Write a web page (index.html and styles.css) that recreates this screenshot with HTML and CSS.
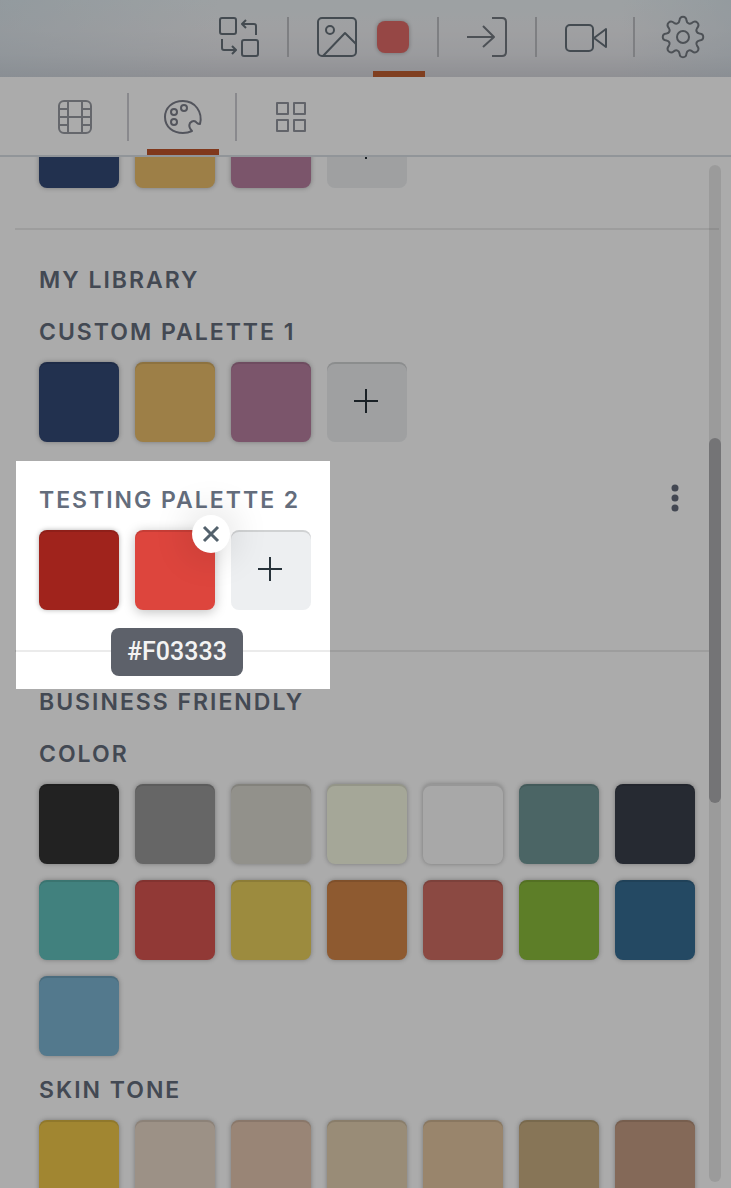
FILE: index.html
```
<!DOCTYPE html>
<html lang="en">
<head>
<meta charset="utf-8">
<meta name="viewport" content="width=device-width, initial-scale=1">
<title>Color palettes</title>
<link rel="stylesheet" href="styles.css">
</head>
<body>
<div class="app">
  <header class="toolbar">
    <button class="tool" type="button" aria-label="Swap">
      <svg class="icon" width="40" height="40" viewBox="0 0 40 40"><rect x="1" y="1" width="16" height="16" rx="2"/><rect x="23" y="23" width="16" height="16" rx="2"/><path d="M37 18V9q0-2-2-2H23M27 3l-4 4 4 4M3 22v9q0 2 2 2h12M13 29l4 4-4 4"/></svg>
    </button>
    <span class="rule"></span>
    <div class="tool-pair">
      <button class="tool" type="button" aria-label="Image">
        <svg class="icon" width="40" height="40" viewBox="0 0 40 40"><rect x="1" y="1" width="38" height="38" rx="4"/><circle cx="13" cy="13" r="4"/><path d="M6 39 28 16l11 11"/></svg>
      </button>
      <button class="tool tool-color" type="button" aria-label="Color"><span class="color-chip"></span></button>
    </div>
    <span class="rule"></span>
    <button class="tool" type="button" aria-label="Enter">
      <svg class="icon icon-soft" width="40" height="40" viewBox="0 0 40 40"><path d="M25 1h10q4 0 4 4v30q0 4-4 4H25M0 20h27M16 9l11 11-11 10"/></svg>
    </button>
    <span class="rule"></span>
    <button class="tool" type="button" aria-label="Video">
      <svg class="icon" width="40" height="40" viewBox="0 0 40 40"><rect x="1" y="8" width="27" height="26" rx="4"/><path d="M29 21l12-9v18z"/></svg>
    </button>
    <span class="rule"></span>
    <button class="tool" type="button" aria-label="Settings">
      <svg class="icon icon-soft" width="40" height="40" viewBox="0 0 40 40"><circle cx="20" cy="20" r="6"/><path d="M16.500 3.500C17-1.500 23-1.500 23.500 3.500C24 6.500 26.500 7.500 29 5.800C33 2.500 37.500 7 34.200 11C32.500 13.500 33.500 16 36.500 16.500C41.500 17 41.500 23 36.500 23.500C33.500 24 32.500 26.500 34.200 29C37.500 33 33 37.500 29 34.200C26.500 32.500 24 33.500 23.500 36.500C23 41.500 17 41.500 16.500 36.500C16 33.500 13.500 32.500 11 34.200C7 37.500 2.500 33 5.800 29C7.500 26.500 6.500 24 3.500 23.500C-1.500 23-1.500 17 3.500 16.500C6.500 16 7.500 13.500 5.800 11C2.500 7 7 2.500 11 5.800C13.500 7.500 16 6.500 16.500 3.500Z"/></svg>
    </button>
  </header>

  <nav class="tabs" aria-label="Panels">
    <button class="tab" type="button" aria-label="Media">
      <svg class="icon icon-light" width="34" height="34" viewBox="0 0 34 34"><rect x="1" y="1" width="32" height="32" rx="5"/><path d="M10 1v32M24 1v32M1 9h9M1 17h32M1 25h9M24 9h9M24 25h9"/></svg>
    </button>
    <button class="tab tab-active" type="button" aria-label="Palettes">
      <svg class="icon icon-palette" width="38" height="34" viewBox="1 1 38 34"><path d="M37 25C40 13 32 2 20 2C9 2 2 9 2 18C2 28 10 34 20 34Q25 34 29 32Q25 28 27 24Q31 20 34 24Q35 25 37 25Z"/><circle cx="11" cy="13" r="3"/><circle cx="21" cy="9" r="3"/><circle cx="11" cy="23" r="3"/></svg>
    </button>
    <button class="tab" type="button" aria-label="Layouts">
      <svg class="icon icon-grid" width="30" height="30" viewBox="0 0 30 30"><path d="M1 1h11v11H1zM18 1h11v11H18zM1 18h11v11H1zM18 18h11v11H18z"/></svg>
    </button>
  </nav>

  <main class="panel">
    <div class="content">
      <div class="swatches">
        <button class="swatch navy" type="button" aria-label="Navy"></button>
        <button class="swatch gold" type="button" aria-label="Gold"></button>
        <button class="swatch mauve" type="button" aria-label="Mauve"></button>
        <button class="swatch add" type="button" aria-label="Add color"><svg class="plus" width="26" height="26" viewBox="0 0 26 26"><path d="M12 0v24M0 12h24"/></svg></button>
      </div>

      <section class="library">
        <h2>MY LIBRARY</h2>
        <div class="palette">
          <h3>CUSTOM PALETTE 1</h3>
          <div class="swatches">
            <button class="swatch navy" type="button" aria-label="Navy"></button>
            <button class="swatch gold" type="button" aria-label="Gold"></button>
            <button class="swatch mauve" type="button" aria-label="Mauve"></button>
            <button class="swatch add" type="button" aria-label="Add color"><svg class="plus" width="26" height="26" viewBox="0 0 26 26"><path d="M12 0v24M0 12h24"/></svg></button>
          </div>
        </div>
        <div class="palette palette-current">
          <div class="palette-head">
            <h3>TESTING PALETTE 2</h3>
            <button class="more" type="button" aria-label="More"><svg width="8" height="28" viewBox="0 0 8 28"><circle cx="4" cy="4" r="3.500"/><circle cx="4" cy="14" r="3.500"/><circle cx="4" cy="24" r="3.500"/></svg></button>
          </div>
          <div class="swatches">
            <button class="swatch crimson" type="button" aria-label="Crimson"></button>
            <div class="swatch-hover">
              <button class="swatch scarlet" type="button" aria-describedby="tip" aria-label="Scarlet"></button>
              <button class="remove" type="button" aria-label="Remove"><svg width="14" height="14" viewBox="0 0 14 14"><path d="M0 0l14 14M14 0 0 14"/></svg></button>
              <span class="tooltip" id="tip" role="tooltip">#F03333</span>
            </div>
            <button class="swatch add" type="button" aria-label="Add color"><svg class="plus" width="26" height="26" viewBox="0 0 26 26"><path d="M12 0v24M0 12h24"/></svg></button>
          </div>
        </div>
      </section>

      <section class="library">
        <h2>BUSINESS FRIENDLY</h2>
        <div class="palette">
          <h3>COLOR</h3>
          <div class="swatches">
            <button class="swatch charcoal" type="button" aria-label="Charcoal"></button>
            <button class="swatch gray" type="button" aria-label="Gray"></button>
            <button class="swatch stone" type="button" aria-label="Stone"></button>
            <button class="swatch ivory" type="button" aria-label="Ivory"></button>
            <button class="swatch white" type="button" aria-label="White"></button>
            <button class="swatch sage" type="button" aria-label="Sage"></button>
            <button class="swatch slate" type="button" aria-label="Slate"></button>
            <button class="swatch teal" type="button" aria-label="Teal"></button>
            <button class="swatch red" type="button" aria-label="Red"></button>
            <button class="swatch yellow" type="button" aria-label="Yellow"></button>
            <button class="swatch orange" type="button" aria-label="Orange"></button>
            <button class="swatch coral" type="button" aria-label="Coral"></button>
            <button class="swatch green" type="button" aria-label="Green"></button>
            <button class="swatch blue" type="button" aria-label="Blue"></button>
            <button class="swatch sky" type="button" aria-label="Sky"></button>
          </div>
        </div>
        <div class="palette">
          <h3>SKIN TONE</h3>
          <div class="swatches">
            <button class="swatch skin-1" type="button" aria-label="Skin tone 1"></button>
            <button class="swatch skin-2" type="button" aria-label="Skin tone 2"></button>
            <button class="swatch skin-3" type="button" aria-label="Skin tone 3"></button>
            <button class="swatch skin-4" type="button" aria-label="Skin tone 4"></button>
            <button class="swatch skin-5" type="button" aria-label="Skin tone 5"></button>
            <button class="swatch skin-6" type="button" aria-label="Skin tone 6"></button>
            <button class="swatch skin-7" type="button" aria-label="Skin tone 7"></button>
          </div>
        </div>
      </section>
    </div>
    <div class="scrollbar"><div class="thumb"></div></div>
  </main>
  <div class="spotlight"></div>
</div>
</body>
</html>
```
FILE: styles.css
```
* { box-sizing: border-box; }

body {
  margin: 0;
  background: #fff;
  color: #646d7c;
  font-family: Inter, "Liberation Sans", sans-serif;
}

button {
  padding: 0;
  border: 0;
  background: none;
  color: inherit;
  cursor: pointer;
}

svg {
  display: block;
  overflow: visible;
}

.app {
  position: relative;
  display: flex;
  flex-direction: column;
  height: 100vh;
  overflow: hidden;
}

/* Top toolbar */
.toolbar {
  display: flex;
  flex: none;
  align-items: center;
  justify-content: flex-end;
  gap: 28px;
  height: 77px;
  padding: 0 28px 3px 0;
  background:
    linear-gradient(90deg, rgba(190, 210, 222, 0.35), transparent 30%, transparent 85%, rgba(190, 210, 222, 0.3)),
    linear-gradient(#eaf1f4, #eeeff2 40%, #e7e8ec 70%, #d5d6dc);
}

.rule {
  width: 2px;
  height: 40px;
  background: #bcbec2;
}

.tool-pair {
  display: flex;
  align-items: center;
  align-self: stretch;
  gap: 20px;
}

.icon {
  fill: none;
  stroke: #66717a;
  stroke-width: 2;
  stroke-linecap: butt;
  stroke-linejoin: round;
}

.icon-soft { stroke: #737980; }
.icon-light { stroke: #979aa1; }
.icon-palette { stroke: #7d7f8b; }
.icon-grid { stroke: #92959e; }

.tool-color {
  position: relative;
  display: flex;
  align-items: center;
  align-self: stretch;
}

.tool-color::after {
  content: "";
  position: absolute;
  bottom: -3px;
  left: -4px;
  width: 52px;
  height: 6px;
  background: #bf5e30;
}

.color-chip {
  width: 32px;
  height: 32px;
  border-radius: 8px;
  background: #e06b68;
  box-shadow: 0 0 4px rgba(0, 0, 0, 0.3);
}

/* Panel tabs */
.tabs {
  display: flex;
  flex: none;
  align-items: center;
  height: 80px;
  padding-left: 21px;
  border-bottom: 2px solid #d9dee5;
}

.tab {
  position: relative;
  display: flex;
  align-items: center;
  justify-content: center;
  align-self: stretch;
  width: 108px;
  padding-top: 2px;
}

.tab + .tab::before {
  content: "";
  position: absolute;
  top: 16px;
  left: -2px;
  width: 2px;
  height: 48px;
  background: #cccdd2;
}

.tab-active::after {
  content: "";
  position: absolute;
  bottom: 0;
  left: 18px;
  width: 72px;
  height: 6px;
  background: #bf542b;
}

/* Scrolled palette list */
.panel {
  position: relative;
  flex: 1;
  min-height: 0;
  overflow: hidden;
}

.content { margin-top: -49px; }

.swatches {
  display: flex;
  flex-wrap: wrap;
  gap: 16px;
  padding: 0 36px 0 39px;
}

.library {
  margin: 40px 12px 0 15px;
  padding-top: 32px;
  border-top: 2px solid rgba(0, 0, 0, 0.08);
}

.library .swatches { padding: 0 24px; }

h2, h3 {
  margin: 0;
  padding: 0 24px;
  font-size: 23px;
  font-weight: 600;
  line-height: 36px;
  letter-spacing: 2px;
}

.palette {
  display: flex;
  flex-direction: column;
  gap: 12px;
  margin-top: 16px;
}

.palette-current { margin-top: 40px; }

.palette-head {
  display: flex;
  align-items: flex-start;
  justify-content: space-between;
  padding-right: 40px;
}

.more {
  padding-top: 2px;
  fill: #646b7b;
}

.swatch {
  display: flex;
  align-items: center;
  justify-content: center;
  width: 80px;
  height: 80px;
  border-radius: 8px;
  box-shadow: inset 0 2px 0 rgba(0, 0, 0, 0.1), 0 0 5px rgba(0, 0, 0, 0.3);
}

.add {
  background: #edeff1;
  box-shadow: inset 0 2px 0 rgba(0, 0, 0, 0.12);
}

.plus {
  fill: none;
  stroke: #27323a;
  stroke-width: 2;
}

.swatch-hover { position: relative; }

.swatch-hover .swatch {
  box-shadow: inset 0 2px 0 rgba(0, 0, 0, 0.1), 0 2px 12px rgba(0, 0, 0, 0.25);
}

.remove {
  position: absolute;
  z-index: 1;
  top: -15px;
  right: -15px;
  display: flex;
  align-items: center;
  justify-content: center;
  width: 38px;
  height: 38px;
  border-radius: 50%;
  background: #fff;
  box-shadow: 0 0 40px rgba(0, 0, 0, 0.2);
}

.remove svg {
  fill: none;
  stroke: #53616c;
  stroke-width: 3;
}

.tooltip {
  position: absolute;
  z-index: 1;
  top: 98px;
  left: -24px;
  padding: 0 16px;
  border-radius: 8px;
  background: rgba(86, 91, 100, 0.96);
  color: #f3f3f3;
  font-family: Roboto, "Liberation Sans", sans-serif;
  font-size: 25px;
  font-weight: 500;
  line-height: 48px;
}

.navy { background: #344977; }
.gold { background: #eabe6b; }
.mauve { background: #b87fa0; }
.crimson { background: #a0231c; }
.scarlet { background: #dd453d; }
.charcoal { background: #333; }
.gray { background: #999; }
.stone { background: #dad8cf; }
.ivory { background: #f6f9e3; }
.white { background: #fbfbfb; }
.sage { background: #719797; }
.slate { background: #393f4b; }
.teal { background: #61c1bc; }
.red { background: #d85551; }
.yellow { background: #e9cf5d; }
.orange { background: #d48648; }
.coral { background: #cf6d63; }
.green { background: #8bbc3c; }
.blue { background: #366e94; }
.sky { background: #7cb5d2; }
.skin-1 { background: #f0c849; }
.skin-2 { background: #e9d8c8; }
.skin-3 { background: #e4c7b0; }
.skin-4 { background: #e4d1b2; }
.skin-5 { background: #e4c7a1; }
.skin-6 { background: #c9af82; }
.skin-7 { background: #c59d83; }

.scrollbar {
  position: absolute;
  top: 8px;
  right: 10px;
  bottom: 6px;
  width: 12px;
  border-radius: 6px;
  background: rgba(0, 0, 0, 0.09);
}

.thumb {
  height: 365px;
  margin-top: 273px;
  border-radius: 6px;
  background: #adadb0;
}

/* Dims everything outside the highlighted palette */
.spotlight {
  position: absolute;
  top: 461px;
  left: 16px;
  width: 314px;
  height: 228px;
  box-shadow: 0 0 0 2000px rgba(0, 0, 0, 0.33);
  pointer-events: none;
}
```
